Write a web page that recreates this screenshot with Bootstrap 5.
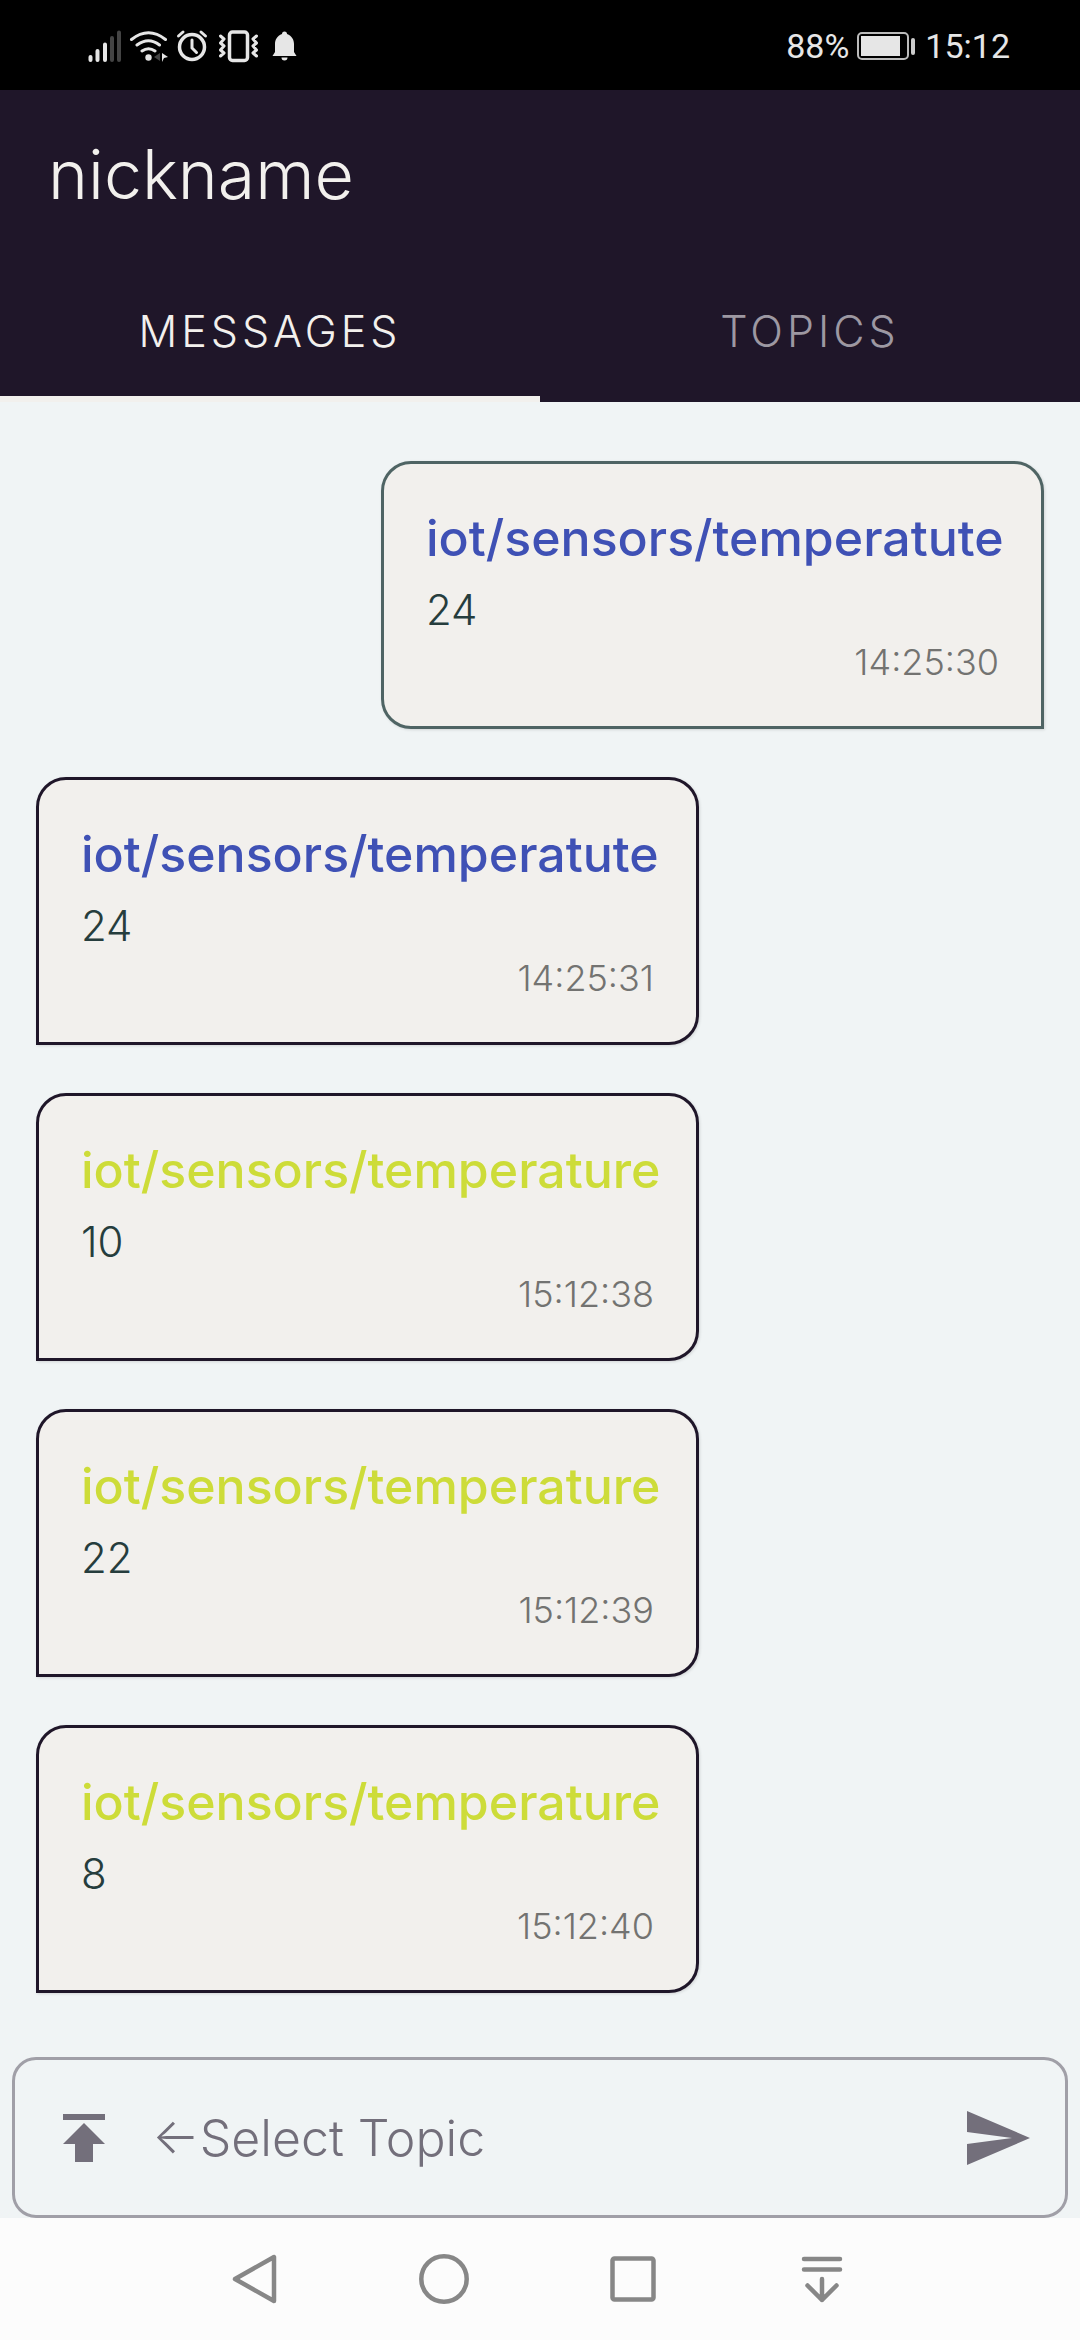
<!DOCTYPE html>
<html lang="en">
<head>
<meta charset="utf-8">
<meta name="viewport" content="width=device-width, initial-scale=1">
<title>nickname</title>
<link rel="stylesheet" href="https://cdn.jsdelivr.net/npm/bootstrap@5.3.0/dist/css/bootstrap.min.css">
<style>
  body { font-family: Inter, "Liberation Sans", sans-serif; background: #f0f4f5; font-weight: 300; }
  .status-bar { background: #000; color: #e6e6e6; height: 90px; padding: 2px 70px 0 88px; font: 400 34px/40px Roboto, sans-serif; }
  .app-head { background: #1f1629; color: #f2f0ed; }
  .app-title { font-size: 68px; line-height: 80px; padding: 44px 48px; font-weight: 300; }
  .app-tabs { height: 144px; }
  .app-tabs .nav-link { font-size: 43px; line-height: 48px; letter-spacing: 4px; color: #9d98a2; border-radius: 0; border-bottom: 6px solid transparent; font-weight: 300; padding-top: 16px; }
  .app-tabs .nav-link.active { color: #f2f0ed; border-bottom-color: #f2f0ed; background: transparent; }
  .feed { padding: 59px 36px 64px; gap: 48px; }
  .bubble { width: 663px; max-width: 100%; background: #f2f0ed; border: 3px solid #1f1629; border-radius: 30px 30px 30px 0; padding: 42px 42px 39px; box-shadow: 1px 1px 3px rgba(0,0,0,.12); }
  .bubble.sent { border-color: #4f6464; border-radius: 30px 30px 0 30px; }
  .topic { font-size: 50px; line-height: 64px; font-weight: 500; white-space: nowrap; }
  .topic-indigo { color: #3f51b5; }
  .topic-lime { color: #cddc39; }
  .reading { font-size: 42px; line-height: 56px; margin-top: 12px; color: #263d3d; font-weight: 300; }
  .stamp { font-size: 36px; line-height: 49px; color: #737371; }
  .composer { margin: 0 12px; height: 161px; border: 3px solid #a09fa7; border-radius: 24px; padding: 0 32px 0 33px; color: #736f7b; }
  .composer .btn { color: inherit; width: 72px; height: 72px; }
  .composer .form-control { font-size: 50px; line-height: 60px; font-weight: 300; color: #736f7b; padding: 0; margin-left: 32px; }
  .composer .form-control::placeholder { color: #736f7b; opacity: 1; }
  .sys-nav { height: 122px; background: #fcfcfc; padding: 0 164px 0 160px; }
  .sys-nav .btn { color: #878787; }
</style>
<script src="https://cdn.jsdelivr.net/npm/bootstrap@5.3.0/dist/js/bootstrap.bundle.min.js"></script>
</head>
<body>
<div class="d-flex flex-column min-vh-100">
  <div class="status-bar d-flex align-items-center justify-content-between">
    <svg width="210" height="36" viewBox="88 27 210 36" fill="none" stroke="#e6e6e6" stroke-linecap="round" aria-hidden="true">
      <g stroke-width="4"><path d="M90.500 56v3M97.500 50v9M105 43.500v15.500"/><path stroke="#444" d="M112 37v22M119 31.500v27.500"/></g>
      <g stroke-width="3"><path d="M131.500 38.500q17-13.500 34 0M137 44q11.500-8.500 22.500 0M142 50q6.500-4.500 13 0"/></g>
      <circle cx="148.500" cy="56.500" r="3.200" fill="#e6e6e6" stroke="none"/>
      <path fill="#444" stroke="none" d="M160 52v8l-6-4z"/><path fill="#e6e6e6" stroke="none" d="M162 52l6 4-4 1-2 4z"/>
      <circle cx="192" cy="46" r="12.500" stroke-width="3.500"/><path stroke-width="3" d="M192 39v8l4.500 4.500M178.500 35l4.500-4M205.500 35l-4.500-4"/>
      <rect x="229.500" y="31" width="18" height="28.500" rx="3" stroke-width="3.500"/>
      <path stroke-width="3" stroke-linejoin="round" d="M220.500 35l3.500 3-3.500 4 3.500 3-3.500 4 3.500 3-3.500 3M256.500 35l-3.500 3 3.500 4-3.500 3 3.500 4-3.500 3 3.500 3"/>
      <path fill="#e6e6e6" stroke="none" d="M282 33a2.500 2.500 0 0 1 5 0c5 2 7 6 7 10v8l2.500 4h-24l2.500-4v-8c0-4 2-8 7-10zM281.500 56.500h6a3 3 0 0 1-6 0z"/>
    </svg>
    <div class="d-flex align-items-center">
      <span>88%</span>
      <svg class="ms-2 me-2" width="60" height="30" viewBox="0 0 60 30" aria-hidden="true"><rect x="1" y="2" width="50" height="26" rx="4" fill="none" stroke="#bbb" stroke-width="2"/><rect x="4" y="5" width="39" height="20" fill="#e6e6e6"/><rect x="54" y="7" width="4" height="17" rx="2" fill="#ccc"/></svg>
      <span>15:12</span>
    </div>
  </div>
  <header class="app-head">
    <h1 class="app-title m-0">nickname</h1>
    <nav class="app-tabs nav nav-pills nav-fill align-items-stretch">
      <a class="nav-link active col-6 d-flex align-items-center justify-content-center" aria-current="page" href="#messages">MESSAGES</a>
      <a class="nav-link col-6 d-flex align-items-center justify-content-center" href="#topics">TOPICS</a>
    </nav>
  </header>
  <main id="messages" class="feed d-flex flex-column flex-grow-1">
    <article class="bubble sent align-self-end"><div class="topic topic-indigo">iot/sensors/temperatute</div><div class="reading">24</div><div class="stamp text-end">14:25:30</div></article>
    <article class="bubble"><div class="topic topic-indigo">iot/sensors/temperatute</div><div class="reading">24</div><div class="stamp text-end">14:25:31</div></article>
    <article class="bubble"><div class="topic topic-lime">iot/sensors/temperature</div><div class="reading">10</div><div class="stamp text-end">15:12:38</div></article>
    <article class="bubble"><div class="topic topic-lime">iot/sensors/temperature</div><div class="reading">22</div><div class="stamp text-end">15:12:39</div></article>
    <article class="bubble"><div class="topic topic-lime">iot/sensors/temperature</div><div class="reading">8</div><div class="stamp text-end">15:12:40</div></article>
  </main>
  <form class="composer d-flex align-items-center">
    <button type="button" class="btn border-0 p-0 flex-shrink-0" aria-label="Choose topic"><svg class="d-block" width="72" height="72" viewBox="0 0 24 24" fill="currentColor"><path d="M5 4v2h14V4H5zm0 10h4v6h6v-6h4l-7-7-7 7z"/></svg></button>
    <input class="form-control bg-transparent border-0 shadow-none" type="text" aria-label="Message" placeholder="←Select Topic">
    <button type="submit" class="btn border-0 p-0 flex-shrink-0" aria-label="Send"><svg class="d-block" width="72" height="72" viewBox="0 0 24 24" fill="currentColor"><path d="M2 21l21-9L2 3v7l15 2-15 2z"/></svg></button>
  </form>
  <nav class="sys-nav d-flex align-items-center justify-content-around" aria-label="System">
    <button type="button" class="btn border-0 p-0" aria-label="Back"><svg class="d-block" width="56" height="56" viewBox="0 0 56 56" fill="none" stroke="currentColor" stroke-width="4.500" stroke-linejoin="round"><path d="M47 6v44L8 28z"/></svg></button>
    <button type="button" class="btn border-0 p-0" aria-label="Home"><svg class="d-block" width="56" height="56" viewBox="0 0 56 56" fill="none" stroke="currentColor" stroke-width="4.500"><circle cx="28" cy="28" r="22.700"/></svg></button>
    <button type="button" class="btn border-0 p-0" aria-label="Recent apps"><svg class="d-block" width="56" height="56" viewBox="0 0 56 56" fill="none" stroke="currentColor" stroke-width="4.500"><rect x="7.500" y="7.500" width="41" height="41" rx="2"/></svg></button>
    <button type="button" class="btn border-0 p-0" aria-label="Notifications"><svg class="d-block" width="56" height="56" viewBox="0 0 56 56" fill="none" stroke="currentColor" stroke-width="4.500" stroke-linecap="round" stroke-linejoin="round"><path d="M10 8h36M10 18.500h36M28 28v21M13.500 34.500L28 49l14.500-14.500"/></svg></button>
  </nav>
</div>
</body>
</html>
